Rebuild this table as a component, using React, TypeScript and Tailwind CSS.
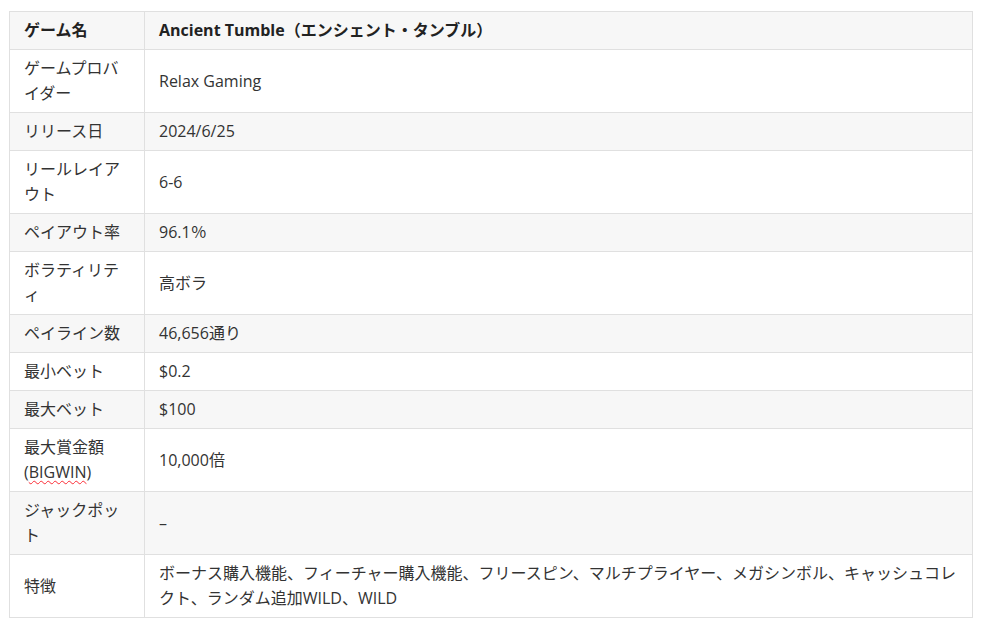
const rows: { label: React.ReactNode; value: React.ReactNode }[] = [
  { label: "ゲームプロバイダー", value: "Relax Gaming" },
  { label: "リリース日", value: "2024/6/25" },
  { label: "リールレイアウト", value: "6-6" },
  { label: "ペイアウト率", value: "96.1％" },
  { label: "ボラティリティ", value: "高ボラ" },
  { label: "ペイライン数", value: "46,656通り" },
  { label: "最小ベット", value: "$0.2" },
  { label: "最大ベット", value: "$100" },
  {
    label: (
      <>
        最大賞金額(
        <span className="underline decoration-wavy decoration-red-500 decoration-1 underline-offset-2">BIGWIN</span>)
      </>
    ),
    value: "10,000倍",
  },
  { label: "ジャックポット", value: "–" },
  {
    label: "特徴",
    value:
      "ボーナス購入機能、フィーチャー購入機能、フリースピン、マルチプライヤー、メガシンボル、キャッシュコレクト、ランダム追加WILD、WILD",
  },
];

export default function App() {
  return (
    <div
      className="min-h-[628px] bg-white pl-[9px] pt-[11px] text-[16px] leading-[25px] text-[#333]"
      style={{ fontFamily: '"Open Sans", "Noto Sans CJK JP", sans-serif' }}
    >
      <table className="w-[964px] table-fixed border-collapse border border-[#e0e0e0]">
        <colgroup>
          <col className="w-[135px]" />
          <col />
        </colgroup>
        <tbody>
          <tr className="bg-[#f7f7f7]">
            <th className="border border-[#e0e0e0] px-[14px] py-[6px] text-left font-bold text-[#222]">ゲーム名</th>
            <th className="border border-[#e0e0e0] px-[14px] py-[6px] text-left font-bold text-[#222]">
              Ancient Tumble（エンシェント・タンブル）
            </th>
          </tr>
          {rows.map((r, i) => (
            <tr key={i} className={i % 2 === 1 ? "bg-[#f7f7f7]" : "bg-white"}>
              <td className="border border-[#e0e0e0] px-[14px] py-[6px] align-middle">{r.label}</td>
              <td className="border border-[#e0e0e0] px-[14px] py-[6px] align-middle">{r.value}</td>
            </tr>
          ))}
        </tbody>
      </table>
    </div>
  );
}
